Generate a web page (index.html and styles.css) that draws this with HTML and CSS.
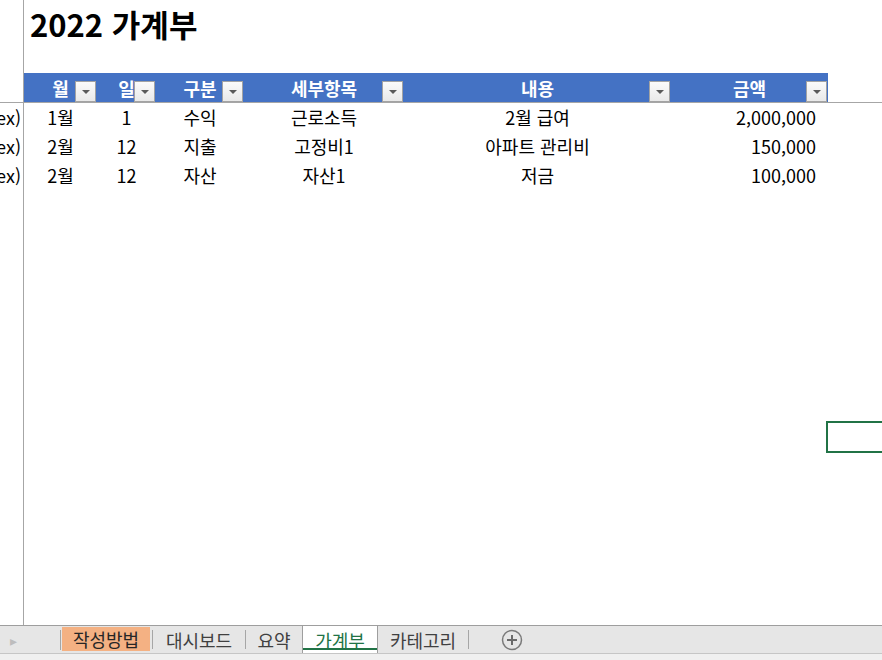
FILE: index.html
```html
<!DOCTYPE html>
<html lang="ko">
<head>
  <meta charset="UTF-8">
  <meta name="viewport" content="width=device-width, initial-scale=1.0">
  <title>2022 가계부</title>
  <link rel="stylesheet" href="styles.css">
</head>
<body>
  <div class="sheet">
    <div class="title-row">
      <h1 class="title">2022 가계부</h1>
    </div>
    <div class="grid">
      <div class="gut head"></div>
      <div class="th">월<span class="dd"></span></div>
      <div class="th">일<span class="dd"></span></div>
      <div class="th">구분<span class="dd"></span></div>
      <div class="th">세부항목<span class="dd"></span></div>
      <div class="th">내용<span class="dd"></span></div>
      <div class="th">금액<span class="dd"></span></div>
      <div class="fill head"></div>

      <div class="gut">(ex)</div>
      <div class="td">1월</div>
      <div class="td">1</div>
      <div class="td">수익</div>
      <div class="td">근로소득</div>
      <div class="td">2월 급여</div>
      <div class="td num">2,000,000</div>
      <div class="fill"></div>

      <div class="gut">(ex)</div>
      <div class="td">2월</div>
      <div class="td">12</div>
      <div class="td">지출</div>
      <div class="td">고정비1</div>
      <div class="td">아파트 관리비</div>
      <div class="td num">150,000</div>
      <div class="fill"></div>

      <div class="gut">(ex)</div>
      <div class="td">2월</div>
      <div class="td">12</div>
      <div class="td">자산</div>
      <div class="td">자산1</div>
      <div class="td">저금</div>
      <div class="td num">100,000</div>
      <div class="fill"></div>
    </div>
    <div class="selection"></div>
  </div>
  <div class="tabbar">
    <div class="nav">&#9656;</div>
    <div class="tab howto">작성방법</div>
    <div class="tab sep w-dash">대시보드</div>
    <div class="tab sep w-sum">요약</div>
    <div class="tab active">가계부</div>
    <div class="tab last">카테고리</div>
    <div class="add">
      <svg width="22" height="22" viewBox="0 0 22 22">
        <circle cx="11" cy="11" r="9.5" fill="none" stroke="#7a7a7a" stroke-width="1.5"/>
        <path d="M11 6v10M6 11h10" stroke="#6a6a6a" stroke-width="2"/>
      </svg>
    </div>
  </div>
  <div class="status"></div>
</body>
</html>
```

FILE: styles.css
```css
* {
  box-sizing: border-box;
}
body {
  margin: 0;
  width: 882px;
  height: 660px;
  overflow: hidden;
  font-family: "Noto Sans CJK KR", "Noto Sans", sans-serif;
  background: #fff;
}
.sheet {
  position: relative;
  height: 625px;
  overflow: hidden;
  background: linear-gradient(#a6a6a6, #a6a6a6) 23px 0 / 1px 100% no-repeat;
}
.title-row {
  height: 73px;
  padding: 4px 0 0 30px;
}
.title {
  margin: 0;
  font-size: 31px;
  line-height: 40px;
  font-weight: 700;
  color: #000;
}
.grid {
  display: grid;
  grid-template-columns: 24px 73px 59px 88px 160px 267px 157px 1fr;
  grid-template-rows: 30px;
  grid-auto-rows: 29px;
}
.head {
  border-bottom: 1px solid #a6a6a6;
}
.gut {
  overflow: hidden;
  white-space: nowrap;
  direction: rtl;
  padding-right: 3px;
  font-size: 18px;
  line-height: 29px;
  color: #000;
}
.th {
  position: relative;
  display: flex;
  align-items: center;
  justify-content: center;
  background: #4472c4;
  border-bottom: 1px solid #a6a6a6;
  color: #fff;
  font-size: 18px;
  font-weight: 700;
}
.dd {
  position: absolute;
  right: 1px;
  bottom: 0;
  width: 21px;
  height: 21px;
  border: 1px solid #a3a3a3;
  background: linear-gradient(#fbfbfb, #e9e9e9);
}
.dd::after {
  content: "";
  position: absolute;
  left: 6px;
  top: 8px;
  border-left: 4px solid transparent;
  border-right: 4px solid transparent;
  border-top: 4px solid #5a5a5a;
}
.td {
  font-size: 18px;
  line-height: 29px;
  text-align: center;
  color: #000;
  white-space: nowrap;
}
.td.num {
  text-align: right;
  padding-right: 12px;
}
.selection {
  position: absolute;
  left: 826px;
  top: 421px;
  width: 70px;
  height: 32px;
  border: 2px solid #217346;
}
.tabbar {
  display: flex;
  align-items: stretch;
  height: 29px;
  border-top: 1px solid #9e9e9e;
  border-bottom: 1px solid #c6c6c6;
  background: #e6e6e6;
}
.nav {
  width: 61px;
  padding-left: 10px;
  margin: 4px 0 3px;
  font-size: 14px;
  line-height: 20px;
  color: #bdbdbd;
  border-right: 1px solid #a6a6a6;
}
.tab {
  position: relative;
  display: flex;
  align-items: center;
  justify-content: center;
  font-size: 18px;
  color: #404040;
}
.tab.howto {
  width: 88px;
  margin: 1px 1px 2px 1px;
  background: #f4b183;
  color: #262626;
}
.tab.sep::before {
  content: "";
  position: absolute;
  left: 0;
  top: 4px;
  bottom: 4px;
  border-left: 1px solid #a6a6a6;
}
.tab.w-dash {
  width: 93px;
  margin-left: 1px;
  padding-left: 1px;
}
.tab.w-sum {
  width: 57px;
  padding-left: 1px;
}
.tab.active {
  width: 76px;
  margin-top: -1px;
  background: #fff;
  border: 1px solid #9e9e9e;
  border-bottom: none;
  color: #217346;
  box-shadow: inset 0 -3px 0 #fff, inset 0 -5px 0 #217346;
}
.tab.last {
  width: 91px;
  padding-right: 1px;
}
.tab.last::after {
  content: "";
  position: absolute;
  right: 0;
  top: 4px;
  bottom: 4px;
  border-right: 1px solid #a6a6a6;
}
.add {
  display: flex;
  align-items: center;
  padding-left: 32px;
}
.status {
  height: 6px;
  background: #f0f0f0;
}
```
